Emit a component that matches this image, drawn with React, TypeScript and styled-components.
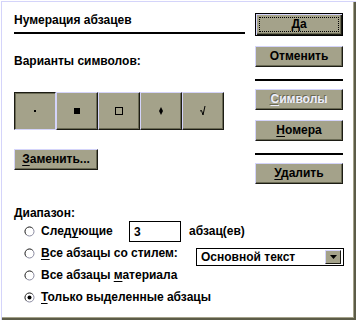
import React from 'react';
import styled, { createGlobalStyle } from 'styled-components';

const palette = {
  face: '#a4a28a',
  light: '#d4d4fa',
  shadow: '#6a6a54',
  dark: '#1c1c14',
  frameShadow: '#5c5c48',
};

const GlobalStyle = createGlobalStyle`
  html, body {
    margin: 0;
    padding: 0;
    background: #ffffff;
  }
  body {
    font-family: "Liberation Sans", Arial, sans-serif;
    font-weight: bold;
    font-size: 12px;
    line-height: 14px;
    color: #000000;
  }
`;

const Frame = styled.div`
  position: relative;
  width: 356px;
  height: 320px;
  box-sizing: border-box;
  padding: 0 12px 0 14px;
  background: #ffffff;
  box-shadow: inset 1px 1px 0 #ffffff, inset 2px 2px 0 ${palette.light},
    inset -1px -1px 0 ${palette.frameShadow}, inset -2px -2px 0 ${palette.frameShadow},
    inset -3px -3px 0 ${palette.face};
`;

const Top = styled.div`
  display: flex;
  align-items: flex-start;
`;

const LeftPanel = styled.div`
  width: 231px;
  padding-top: 13px;
  display: flex;
  flex-direction: column;
  align-items: flex-start;
`;

const RightPanel = styled.div`
  width: 88px;
  margin-left: 10px;
  padding-top: 13px;
  display: flex;
  flex-direction: column;
`;

const Heading = styled.div<{ $gap?: number }>`
  margin-top: ${(p) => p.$gap ?? 0}px;
  height: 14px;
  white-space: nowrap;
`;

const Rule = styled.div<{ $gap: number }>`
  align-self: stretch;
  height: 2px;
  margin-top: ${(p) => p.$gap}px;
  background: #000000;
`;

const Button = styled.button<{ $gap?: number; $width?: number; $disabled?: boolean }>`
  display: flex;
  align-items: center;
  justify-content: center;
  box-sizing: border-box;
  width: ${(p) => (p.$width ? `${p.$width}px` : '100%')};
  height: 21px;
  margin: ${(p) => p.$gap ?? 0}px 0 0 0;
  padding: 0 0 1px 0;
  font: inherit;
  color: ${(p) => (p.$disabled ? '#eeeefc' : '#000000')};
  text-shadow: ${(p) => (p.$disabled ? `-1px -1px 0 ${palette.shadow}` : 'none')};
  background: ${palette.face};
  border: 1px solid;
  border-color: ${palette.light} ${palette.dark} ${palette.dark} ${palette.light};
  box-shadow: inset -1px -1px 0 ${palette.shadow};
  outline: none;
  cursor: default;

  u {
    text-decoration-thickness: 1px;
    text-underline-offset: 2px;
  }
`;

const DefaultButton = styled(Button)`
  position: relative;
  height: 23px;
  border: 1px solid #000000;
  box-shadow: inset 1px 1px 0 ${palette.light}, inset -1px -1px 0 ${palette.dark},
    inset -2px -2px 0 ${palette.shadow};

  &::after {
    content: '';
    position: absolute;
    inset: 3px 3px 3px 3px;
    border: 1px dotted #000000;
  }
`;

const SymbolRow = styled.div`
  display: flex;
  margin-top: 24px;
`;

const SymbolButton = styled.div<{ $pressed?: boolean }>`
  width: 42px;
  height: 38px;
  box-sizing: border-box;
  display: flex;
  align-items: center;
  justify-content: center;
  background: ${palette.face};
  border: 1px solid;
  border-color: ${(p) =>
    p.$pressed
      ? `${palette.dark} ${palette.light} ${palette.light} ${palette.dark}`
      : `${palette.light} ${palette.dark} ${palette.dark} ${palette.light}`};
  box-shadow: ${(p) =>
    p.$pressed ? `inset 1px 1px 0 ${palette.shadow}` : `inset -1px -1px 0 ${palette.shadow}`};
`;

const Bottom = styled.div`
  margin-top: 22px;
  display: flex;
  flex-direction: column;
`;

const Row = styled.div`
  display: flex;
  align-items: center;
  height: 22px;
`;

const RadioLabel = styled.span<{ $width?: number }>`
  margin-left: 6px;
  white-space: nowrap;
  width: ${(p) => (p.$width ? `${p.$width}px` : 'auto')};

  u {
    text-decoration-thickness: 1px;
    text-underline-offset: 2px;
  }
`;

const NumberField = styled.div`
  width: 52px;
  height: 21px;
  box-sizing: border-box;
  border: 1px solid #000000;
  padding: 3px 0 0 4px;
  font-weight: bold;
  background: #ffffff;
`;

const Suffix = styled.span`
  margin-left: 8px;
`;

const Select = styled.div`
  margin-left: auto;
  margin-top: 8px;
  width: 148px;
  height: 18px;
  box-sizing: border-box;
  border: 1px solid #000000;
  display: flex;
  align-items: center;
  padding: 0 2px 0 4px;
  background: #ffffff;
`;

const SelectText = styled.span`
  flex: 1;
  white-space: nowrap;
`;

const DropButton = styled.div`
  width: 16px;
  height: 14px;
  box-sizing: border-box;
  display: flex;
  align-items: center;
  justify-content: center;
  background: ${palette.face};
  border: 1px solid;
  border-color: ${palette.light} ${palette.dark} ${palette.dark} ${palette.light};
`;

const Radio: React.FC<{ checked?: boolean }> = ({ checked }) => (
  <svg width="11" height="11" viewBox="0 0 11 11" style={{ marginLeft: 10, flex: 'none' }}>
    <circle cx="5.5" cy="5.5" r="4.5" fill="#ffffff" stroke="#8a8aa0" strokeWidth="1" />
    <path d="M2.3 8.7 A4.5 4.5 0 0 1 8.7 2.3" fill="none" stroke="#4a4a40" strokeWidth="1" />
    {checked && <circle cx="5.5" cy="5.5" r="2" fill="#000000" />}
  </svg>
);

type SymbolKind = 'dot' | 'square' | 'hollow' | 'diamond' | 'check';

const SymbolGlyph: React.FC<{ kind: SymbolKind }> = ({ kind }) => (
  <svg width="10" height="10" viewBox="0 0 10 10">
    {kind === 'dot' && <rect x="4" y="4" width="2" height="2" fill="#000" />}
    {kind === 'square' && <rect x="2" y="2" width="6" height="6" fill="#000" />}
    {kind === 'hollow' && (
      <rect x="1.5" y="1.5" width="7" height="7" fill="none" stroke="#000" strokeWidth="1" />
    )}
    {kind === 'diamond' && <polygon points="5,1 7,5 5,9 3,5" fill="#000" />}
    {kind === 'check' && (
      <polyline points="2,5 3.5,4.5 5,9 7,0" fill="none" stroke="#000" strokeWidth="1" />
    )}
  </svg>
);

const symbols: SymbolKind[] = ['dot', 'square', 'hollow', 'diamond', 'check'];

const App: React.FC = () => (
  <>
    <GlobalStyle />
    <Frame>
      <Top>
        <LeftPanel>
          <Heading>Нумерация абзацев</Heading>
          <Rule $gap={5} />
          <Heading $gap={20}>Варианты символов:</Heading>
          <SymbolRow>
            {symbols.map((kind, index) => (
              <SymbolButton key={kind} $pressed={index === 0}>
                <SymbolGlyph kind={kind} />
              </SymbolButton>
            ))}
          </SymbolRow>
          <Button type="button" $gap={19} $width={84}>
            <span>
              <u>З</u>аменить...
            </span>
          </Button>
        </LeftPanel>
        <RightPanel>
          <DefaultButton type="button">Да</DefaultButton>
          <Button type="button" $gap={10}>
            Отменить
          </Button>
          <Rule $gap={12} />
          <Button type="button" $gap={8} $disabled>
            <span>
              <u>С</u>имволы
            </span>
          </Button>
          <Button type="button" $gap={10}>
            <span>
              <u>Н</u>омера
            </span>
          </Button>
          <Rule $gap={12} />
          <Button type="button" $gap={8}>
            <span>
              <u>У</u>далить
            </span>
          </Button>
        </RightPanel>
      </Top>
      <Bottom>
        <Heading>Диапазон:</Heading>
        <Row>
          <Radio />
          <RadioLabel $width={88}>
            След<u>у</u>ющие
          </RadioLabel>
          <NumberField>3</NumberField>
          <Suffix>абзац(ев)</Suffix>
        </Row>
        <Row>
          <Radio />
          <RadioLabel>
            <u>В</u>се абзацы со стилем:
          </RadioLabel>
          <Select>
            <SelectText>Основной текст</SelectText>
            <DropButton>
              <svg width="7" height="4" viewBox="0 0 7 4">
                <polygon points="0,0 7,0 3.5,4" fill="#000" />
              </svg>
            </DropButton>
          </Select>
        </Row>
        <Row>
          <Radio />
          <RadioLabel>
            Все абзацы <u>м</u>атериала
          </RadioLabel>
        </Row>
        <Row>
          <Radio checked />
          <RadioLabel>
            <u>Т</u>олько выделенные абзацы
          </RadioLabel>
        </Row>
      </Bottom>
    </Frame>
  </>
);

export default App;
